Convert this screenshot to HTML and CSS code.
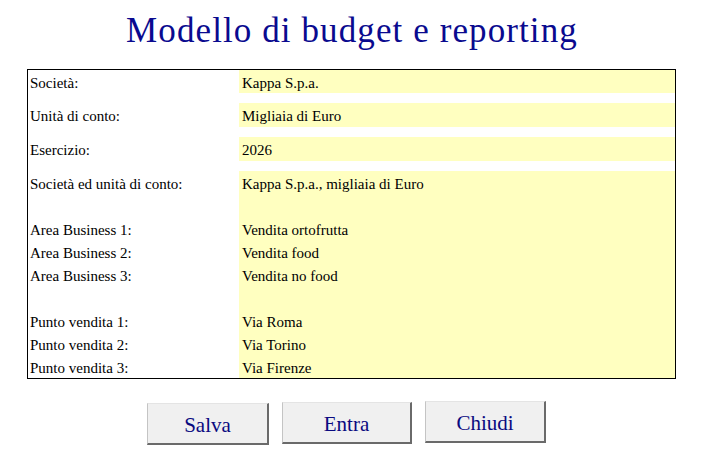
FILE: index.html
```html
<!DOCTYPE html>
<html lang="it">
<head>
<meta charset="utf-8">
<title>Modello di budget e reporting</title>
<link rel="stylesheet" href="styles.css">
</head>
<body>
<h1 class="title">Modello di budget e reporting</h1>
<div class="sheet">
  <div class="row"><div class="label">Società:</div><div class="value">Kappa S.p.a.</div></div>
  <div class="spacer spacer-10"></div>
  <div class="row tall"><div class="label">Unità di conto:</div><div class="value">Migliaia di Euro</div></div>
  <div class="spacer spacer-10"></div>
  <div class="row tall"><div class="label">Esercizio:</div><div class="value">2026</div></div>
  <div class="spacer spacer-10"></div>
  <div class="row"><div class="label">Società ed unità di conto:</div><div class="value">Kappa S.p.a., migliaia di Euro</div></div>
  <div class="row"><div class="label"></div><div class="value"></div></div>
  <div class="row"><div class="label">Area Business 1:</div><div class="value">Vendita ortofrutta</div></div>
  <div class="row"><div class="label">Area Business 2:</div><div class="value">Vendita food</div></div>
  <div class="row"><div class="label">Area Business 3:</div><div class="value">Vendita no food</div></div>
  <div class="row"><div class="label"></div><div class="value"></div></div>
  <div class="row"><div class="label">Punto vendita 1:</div><div class="value">Via Roma</div></div>
  <div class="row"><div class="label">Punto vendita 2:</div><div class="value">Via Torino</div></div>
  <div class="row"><div class="label">Punto vendita 3:</div><div class="value">Via Firenze</div></div>
</div>
<div class="actions">
  <button class="btn btn-salva" type="button">Salva</button>
  <button class="btn btn-entra" type="button">Entra</button>
  <button class="btn btn-chiudi" type="button">Chiudi</button>
</div>
</body>
</html>
```

FILE: styles.css
```css
html, body {
  margin: 0;
  padding: 0;
  background: #ffffff;
}

body {
  width: 709px;
  font-family: "Liberation Serif", "Times New Roman", serif;
  color: #000000;
}

.title {
  margin: 0 0 19px 0;
  padding-top: 11px;
  height: 39px;
  width: 650px;
  margin-left: 27px;
  text-align: center;
  font-family: "Liberation Serif", "Times New Roman", serif;
  font-weight: normal;
  font-size: 35px;
  line-height: 39px;
  letter-spacing: 1.1px;
  color: #0a0a8f;
}

.sheet {
  margin-left: 27px;
  width: 647px;
  border: 1px solid #000000;
  display: flex;
  flex-direction: column;
}

.row {
  display: grid;
  grid-template-columns: 211px 1fr;
  height: 23px;
}

.row.tall {
  height: 24px;
}

.spacer-10 {
  height: 10px;
}

.label,
.value {
  font-size: 15px;
  line-height: 20px;
  padding-top: 3px;
  white-space: nowrap;
  overflow: hidden;
}

.label {
  padding-left: 2px;
}

.value {
  background: #ffffc0;
  padding-left: 3px;
}

.actions {
  display: flex;
  align-items: flex-start;
  margin-top: 22px;
  margin-left: 147px;
  gap: 13px;
}

.btn {
  box-sizing: border-box;
  height: 42px;
  padding: 3px 0 0 0;
  background: #f0f0f0;
  border-style: solid;
  border-width: 1px 2px 2px 1px;
  border-color: #e4e4e4 #6a6a6a #6a6a6a #c4c4c4;
  border-radius: 0;
  font-family: "Liberation Serif", "Times New Roman", serif;
  font-size: 21px;
  color: #0a0a80;
  cursor: pointer;
}

.btn-salva {
  width: 122px;
  margin-top: 2px;
}

.btn-entra {
  width: 130px;
  margin-top: 1px;
}

.btn-chiudi {
  width: 121px;
  margin-top: 0;
}
```
